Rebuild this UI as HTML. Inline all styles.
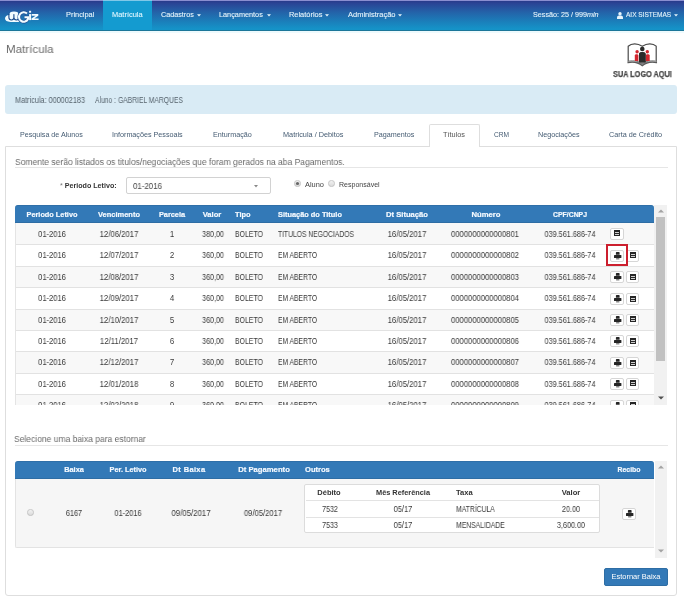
<!DOCTYPE html><html><head><meta charset="utf-8"><style>
html,body{margin:0;padding:0;width:684px;height:600px;overflow:hidden;background:#fff;}
body{position:relative;font-family:"Liberation Sans",sans-serif;-webkit-font-smoothing:antialiased;}
.t{position:absolute;line-height:0;white-space:nowrap;will-change:transform;}
.nv{-webkit-text-stroke:0.1px currentColor;}
.hd{-webkit-text-stroke:0.2px currentColor;}
</style></head><body>

<div style="position:absolute;left:0px;top:0px;width:684px;height:31px;box-sizing:border-box;background:linear-gradient(#283686 0px,#2a4294 3px,#2462a8 12px,#1a80bb 22px,#1593c8 29px);"></div>
<div style="position:absolute;left:0px;top:0px;width:684px;height:1px;box-sizing:border-box;background:#8a8ed0;"></div>
<div style="position:absolute;left:0px;top:29.5px;width:684px;height:1.5px;box-sizing:border-box;background:#1b7699;"></div>
<div style="position:absolute;left:0px;top:31px;width:684px;height:2px;box-sizing:border-box;background:#eefafd;"></div>
<div style="position:absolute;left:103px;top:1px;width:49px;height:28.5px;box-sizing:border-box;background:#149bd0;"></div>
<div style="position:absolute;left:103px;top:0px;width:49px;height:1px;box-sizing:border-box;background:#80c8e8;"></div>
<svg style="position:absolute;left:0px;top:0px" width="45" height="30" viewBox="0 0 45 30">
<path d="M9.3 15 C9.3 12.6 10.8 11.5 14 11.5 C17.2 11.5 18.8 12.6 18.8 15 L20.5 15 L20.5 20.6 C20.5 21.4 19.8 21.9 18.5 21.9 L10.5 21.9 C7 21.9 5 20.6 5 18.6 C5 16.6 6.8 15.2 9.3 15 Z" fill="#f2fbff"/>
<path d="M8.9 14 L8.9 17.6 Q8.9 20 11.35 20 Q13.9 20 13.9 17.6 L13.9 14.6 M13.9 17.6 Q13.9 20 16.45 20 Q19 20 19 17.6 L19 14" stroke="#1f4e8e" stroke-width="1.15" fill="none" stroke-linecap="round"/>
<path d="M27 13.6 A4.7 4.7 0 1 0 28 19 L28 17.2 L24.5 17.2" stroke="#1d4f93" stroke-width="3.4" fill="none"/>
<path d="M27 13.6 A4.7 4.7 0 1 0 28 19 L28 17.2 L24.5 17.2" stroke="#f2fbff" stroke-width="2.1" fill="none"/>
<rect x="29.1" y="14.1" width="2" height="6" fill="#f2fbff"/>
<rect x="29.1" y="10.8" width="2" height="1.9" fill="#f2fbff"/>
<path d="M31.7 14.1 L38.3 14.1 L38.3 15.7 L34.3 18.4 L38.6 18.4 L38.6 20.1 L31.5 20.1 L31.5 18.6 L35.6 15.8 L31.7 15.8 Z" fill="#f2fbff"/>
</svg>
<div class="t nv" style="left:65.8px;top:15.01px;font-size:7.4px;color:#e6f4fb;font-weight:normal;">Principal</div>
<div class="t nv" style="left:111.8px;top:14.99px;font-size:7.45px;color:#dff6ff;font-weight:normal;">Matrícula</div>
<div class="t nv" style="left:160.6px;top:15.08px;font-size:7.2px;color:#e6f4fb;font-weight:normal;">Cadastros</div>
<svg style="position:absolute;left:197.2px;top:14.2px" width="4" height="3" viewBox="0 0 4 3"><path d="M0 0.3 L4 0.3 L2 2.5 Z" fill="#e6f4fb"/></svg>
<div class="t nv" style="left:219.2px;top:15.05px;font-size:7.3px;color:#e6f4fb;font-weight:normal;">Lançamentos</div>
<svg style="position:absolute;left:266.5px;top:14.2px" width="4" height="3" viewBox="0 0 4 3"><path d="M0 0.3 L4 0.3 L2 2.5 Z" fill="#e6f4fb"/></svg>
<div class="t nv" style="left:288.6px;top:15.00px;font-size:7.42px;color:#e6f4fb;font-weight:normal;">Relatórios</div>
<svg style="position:absolute;left:325.2px;top:14.2px" width="4" height="3" viewBox="0 0 4 3"><path d="M0 0.3 L4 0.3 L2 2.5 Z" fill="#e6f4fb"/></svg>
<div class="t nv" style="left:347.5px;top:14.98px;font-size:7.5px;color:#e6f4fb;font-weight:normal;">Administração</div>
<svg style="position:absolute;left:398.2px;top:14.2px" width="4" height="3" viewBox="0 0 4 3"><path d="M0 0.3 L4 0.3 L2 2.5 Z" fill="#e6f4fb"/></svg>
<div class="t nv" style="left:532.5px;top:15.08px;font-size:7.2px;color:#e6f4fb;font-weight:normal;">Sessão: 25 / 999<i>min</i></div>
<svg style="position:absolute;left:617px;top:11.5px" width="6" height="7" viewBox="0 0 6 7"><circle cx="3" cy="1.8" r="1.7" fill="#e6f4fb"/><path d="M0 7 L0 5.6 C0 4.2 1.2 3.6 3 3.6 C4.8 3.6 6 4.2 6 5.6 L6 7 Z" fill="#e6f4fb"/></svg>
<div class="t nv" style="left:626px;top:15.33px;font-size:6.5px;color:#e6f4fb;font-weight:normal;">AIX SISTEMAS</div>
<svg style="position:absolute;left:673.5px;top:14.2px" width="4" height="3" viewBox="0 0 4 3"><path d="M0 0.3 L4 0.3 L2 2.5 Z" fill="#e6f4fb"/></svg>
<div class="t " style="left:5.6px;top:48.68px;font-size:11.776649746192893px;color:#6c6c6c;font-weight:normal;transform:scaleX(0.985);transform-origin:0 0;">Matrícula</div>
<svg style="position:absolute;left:626px;top:42px" width="32" height="26" viewBox="0 0 32 26">
<path d="M2.2 19.5 L2.2 4.2 C5.5 1 11.5 1 16.3 4.2 C21 1 27 1 30.2 4.2 L30.2 19.5" stroke="#4a4a4a" stroke-width="1.2" fill="none"/>
<path d="M2 19.4 L2 20.6 C7 19.6 12 20.2 16.3 23.8 C20.5 20.2 25.5 19.6 30.5 20.6 L30.5 19.4" stroke="#5a5a5a" stroke-width="1.1" fill="#8a8a8a"/>
<path d="M3 19 C8 18.3 12.5 19 16.3 21.8 C20 19 24.5 18.3 29.5 19" stroke="#777" stroke-width="0.9" fill="none"/>
<circle cx="16.3" cy="7" r="2.3" fill="#2b2b2b"/>
<path d="M13 20.3 L13 12 C13 9.2 19.6 9.2 19.6 12 L19.6 20.3 Z" fill="#2b2b2b"/>
<circle cx="11.1" cy="9.8" r="1.7" fill="#d3262e"/>
<path d="M8.8 19 L8.8 13.6 C8.8 11.8 12.4 11.8 12.4 13.6 L12.4 19 Z" fill="#d3262e"/>
<circle cx="21.3" cy="9.8" r="1.7" fill="#d3262e"/>
<path d="M19.8 19 L19.8 13.6 C19.8 11.8 23.7 11.8 23.7 13.6 L23.7 19 Z" fill="#d3262e"/>
<path d="M13 20.3 L13 12 C13 9.2 19.6 9.2 19.6 12 L19.6 20.3 Z" fill="#2b2b2b"/>
</svg>
<div class="t " style="left:612.5px;top:74.85px;font-size:8.133333333333333px;color:#4a4a4a;font-weight:bold;-webkit-text-stroke:0.25px #4a4a4a;transform:scaleX(0.900);transform-origin:0 0;">SUA LOGO AQUI</div>
<div style="position:absolute;left:5px;top:85.3px;width:672px;height:28.5px;box-sizing:border-box;background:#d9ebf5;border-radius:3px;"></div>
<div class="t " style="left:15px;top:99.59px;font-size:8.3px;color:#56636d;font-weight:normal;transform:scaleX(0.877);transform-origin:0 0;">Matricula: 000002183</div>
<div class="t " style="left:94.9px;top:99.59px;font-size:8.3px;color:#56636d;font-weight:normal;transform:scaleX(0.814);transform-origin:0 0;">Aluno : GABRIEL MARQUES</div>
<div style="position:absolute;left:5px;top:146px;width:672px;height:449.5px;box-sizing:border-box;border:1px solid #dedede;border-radius:0 0 3px 3px;"></div>
<div style="position:absolute;left:428.8px;top:124.2px;width:51.19999999999999px;height:22.799999999999997px;box-sizing:border-box;background:#fff;border:1px solid #dedede;border-bottom:none;border-radius:2px 2px 0 0;"></div>
<div class="t " style="left:19.6px;top:135.30px;font-size:7.15px;color:#445b72;font-weight:normal;">Pesquisa de Alunos</div>
<div class="t " style="left:112px;top:135.28px;font-size:7.2px;color:#445b72;font-weight:normal;">Informações Pessoais</div>
<div class="t " style="left:213px;top:135.28px;font-size:7.2px;color:#445b72;font-weight:normal;">Enturmação</div>
<div class="t " style="left:283px;top:135.25px;font-size:7.3px;color:#445b72;font-weight:normal;">Matricula / Debitos</div>
<div class="t " style="left:374px;top:135.28px;font-size:7.2px;color:#445b72;font-weight:normal;">Pagamentos</div>
<div class="t " style="left:443px;top:135.23px;font-size:7.33px;color:#555;font-weight:normal;">Títulos</div>
<div class="t " style="left:493.9px;top:135.48px;font-size:6.63px;color:#445b72;font-weight:normal;">CRM</div>
<div class="t " style="left:538px;top:135.28px;font-size:7.2px;color:#445b72;font-weight:normal;">Negociações</div>
<div class="t " style="left:608.9px;top:135.27px;font-size:7.24px;color:#445b72;font-weight:normal;">Carta de Crédito</div>
<div class="t " style="left:15px;top:161.54px;font-size:9.6px;color:#6a6a6a;font-weight:normal;transform:scaleX(0.887);transform-origin:0 0;">Somente serão listados os titulos/negociações que foram gerados na aba Pagamentos.</div>
<div style="position:absolute;left:15px;top:167px;width:653px;height:1px;box-sizing:border-box;background:#e6e6e6;"></div>
<div class="t " style="left:60px;top:186.20px;font-size:7.14px;color:#333;font-weight:bold;"><span style="font-weight:normal;color:#777">*</span> Periodo Letivo:</div>
<div style="position:absolute;left:126.3px;top:177.4px;width:144.39999999999998px;height:17.0px;box-sizing:border-box;border:1px solid #d2d2d2;border-radius:2px;background:#fff;"></div>
<div class="t " style="left:132.9px;top:185.79px;font-size:8.3px;color:#444;font-weight:normal;transform:scaleX(0.952);transform-origin:0 0;">01-2016</div>
<svg style="position:absolute;left:254px;top:185px" width="4" height="3" viewBox="0 0 4 3"><path d="M0 0 L4 0 L2 2.5 Z" fill="#888"/></svg>
<svg style="position:absolute;left:294.0px;top:180.2px" width="7" height="7" viewBox="0 0 7 7"><defs><linearGradient id="g297" x1="0" y1="0" x2="0" y2="1"><stop offset="0" stop-color="#f4f4f4"/><stop offset="1" stop-color="#d9d9d9"/></linearGradient></defs><circle cx="3.5" cy="3.5" r="3.1" fill="url(#g297)" stroke="#b8b8b8" stroke-width="0.7"/><circle cx="3.5" cy="3.5" r="1.6" fill="#666"/></svg>
<div class="t " style="left:305px;top:184.60px;font-size:7.43px;color:#444;font-weight:normal;">Aluno</div>
<svg style="position:absolute;left:327.9px;top:180.2px" width="7" height="7" viewBox="0 0 7 7"><defs><linearGradient id="g331" x1="0" y1="0" x2="0" y2="1"><stop offset="0" stop-color="#f4f4f4"/><stop offset="1" stop-color="#d9d9d9"/></linearGradient></defs><circle cx="3.5" cy="3.5" r="3.1" fill="url(#g331)" stroke="#b8b8b8" stroke-width="0.7"/></svg>
<div class="t " style="left:339.3px;top:184.74px;font-size:7.04px;color:#444;font-weight:normal;">Responsável</div>
<div style="position:absolute;left:0;top:0;width:684px;height:404.7px;overflow:hidden;">
<div style="position:absolute;left:14.5px;top:205px;width:639.8px;height:18px;box-sizing:border-box;background:#3379b7;border-radius:3px 3px 0 0;border-top:1px solid #2f6fa8;border-bottom:1px solid #2e6da4;"></div>
<div class="t hd" style="left:-248.25px;width:600px;text-align:center;top:214.93px;font-size:7.34px;color:#f4f9ff;font-weight:bold;">Periodo Letivo</div>
<div class="t hd" style="left:-180.75px;width:600px;text-align:center;top:214.88px;font-size:7.48px;color:#f4f9ff;font-weight:bold;">Vencimento</div>
<div class="t hd" style="left:-128.25px;width:600px;text-align:center;top:214.91px;font-size:7.39px;color:#f4f9ff;font-weight:bold;">Parcela</div>
<div class="t hd" style="left:-88px;width:600px;text-align:center;top:214.84px;font-size:7.6px;color:#f4f9ff;font-weight:bold;">Valor</div>
<div class="t hd" style="left:235.3px;top:214.91px;font-size:7.41px;color:#f4f9ff;font-weight:bold;">Tipo</div>
<div class="t hd" style="left:278.4px;top:214.91px;font-size:7.4px;color:#f4f9ff;font-weight:bold;">Situação do Titulo</div>
<div class="t hd" style="left:107px;width:600px;text-align:center;top:214.83px;font-size:7.64px;color:#f4f9ff;font-weight:bold;">Dt Situação</div>
<div class="t hd" style="left:185.60000000000002px;width:600px;text-align:center;top:214.81px;font-size:7.68px;color:#f4f9ff;font-weight:bold;">Número</div>
<div class="t hd" style="left:269.75px;width:600px;text-align:center;top:215.09px;font-size:6.9px;color:#f4f9ff;font-weight:bold;">CPF/CNPJ</div>
<div style="position:absolute;left:14.5px;top:223px;width:639.8px;height:22px;box-sizing:border-box;background:#f8f8f8;border-left:1px solid #e4e4e4;"></div>
<div style="position:absolute;left:14.5px;top:244px;width:639.8px;height:23px;box-sizing:border-box;background:#fff;border-left:1px solid #e4e4e4;"></div>
<div style="position:absolute;left:14.5px;top:266px;width:639.8px;height:22px;box-sizing:border-box;background:#f8f8f8;border-left:1px solid #e4e4e4;"></div>
<div style="position:absolute;left:14.5px;top:287px;width:639.8px;height:23px;box-sizing:border-box;background:#fff;border-left:1px solid #e4e4e4;"></div>
<div style="position:absolute;left:14.5px;top:309px;width:639.8px;height:22px;box-sizing:border-box;background:#f8f8f8;border-left:1px solid #e4e4e4;"></div>
<div style="position:absolute;left:14.5px;top:330px;width:639.8px;height:22px;box-sizing:border-box;background:#fff;border-left:1px solid #e4e4e4;"></div>
<div style="position:absolute;left:14.5px;top:351px;width:639.8px;height:23px;box-sizing:border-box;background:#f8f8f8;border-left:1px solid #e4e4e4;"></div>
<div style="position:absolute;left:14.5px;top:373px;width:639.8px;height:22px;box-sizing:border-box;background:#fff;border-left:1px solid #e4e4e4;"></div>
<div style="position:absolute;left:14.5px;top:394px;width:639.8px;height:23px;box-sizing:border-box;background:#f8f8f8;border-left:1px solid #e4e4e4;"></div>
<div style="position:absolute;left:15.5px;top:244px;width:638.8px;height:1px;box-sizing:border-box;background:#e2e2e2;"></div>
<div style="position:absolute;left:15.5px;top:266px;width:638.8px;height:1px;box-sizing:border-box;background:#e2e2e2;"></div>
<div style="position:absolute;left:15.5px;top:287px;width:638.8px;height:1px;box-sizing:border-box;background:#e2e2e2;"></div>
<div style="position:absolute;left:15.5px;top:309px;width:638.8px;height:1px;box-sizing:border-box;background:#e2e2e2;"></div>
<div style="position:absolute;left:15.5px;top:330px;width:638.8px;height:1px;box-sizing:border-box;background:#e2e2e2;"></div>
<div style="position:absolute;left:15.5px;top:351px;width:638.8px;height:1px;box-sizing:border-box;background:#e2e2e2;"></div>
<div style="position:absolute;left:15.5px;top:373px;width:638.8px;height:1px;box-sizing:border-box;background:#e2e2e2;"></div>
<div style="position:absolute;left:15.5px;top:394px;width:638.8px;height:1px;box-sizing:border-box;background:#e2e2e2;"></div>
<div style="position:absolute;left:15.5px;top:416px;width:638.8px;height:1px;box-sizing:border-box;background:#e2e2e2;"></div>
<div class="t " style="left:-248.25px;width:600px;text-align:center;top:233.99px;font-size:8.3px;color:#383838;font-weight:normal;transform:scaleX(0.910);transform-origin:50% 0;">01-2016</div>
<div class="t " style="left:-180.7px;width:600px;text-align:center;top:233.99px;font-size:8.3px;color:#383838;font-weight:normal;transform:scaleX(0.928);transform-origin:50% 0;">12/06/2017</div>
<div class="t " style="left:-128px;width:600px;text-align:center;top:233.99px;font-size:8.3px;color:#383838;font-weight:normal;transform:scaleX(0.892);transform-origin:50% 0;">1</div>
<div class="t " style="left:-87.4px;width:600px;text-align:center;top:233.99px;font-size:8.3px;color:#383838;font-weight:normal;transform:scaleX(0.859);transform-origin:50% 0;">380,00</div>
<div class="t " style="left:235.3px;top:233.99px;font-size:8.3px;color:#383838;font-weight:normal;transform:scaleX(0.835);transform-origin:0 0;">BOLETO</div>
<div class="t " style="left:278.4px;top:233.99px;font-size:8.3px;color:#383838;font-weight:normal;transform:scaleX(0.812);transform-origin:0 0;">TITULOS NEGOCIADOS</div>
<div class="t " style="left:106.5px;width:600px;text-align:center;top:233.99px;font-size:8.3px;color:#383838;font-weight:normal;transform:scaleX(0.928);transform-origin:50% 0;">16/05/2017</div>
<div class="t " style="left:185.35000000000002px;width:600px;text-align:center;top:233.99px;font-size:8.3px;color:#383838;font-weight:normal;transform:scaleX(0.920);transform-origin:50% 0;">0000000000000801</div>
<div class="t " style="left:270px;width:600px;text-align:center;top:233.99px;font-size:8.3px;color:#383838;font-weight:normal;transform:scaleX(0.877);transform-origin:50% 0;">039.561.686-74</div>
<div style="position:absolute;left:610px;top:228px;width:14px;height:12px;box-sizing:border-box;background:#fff;border:1px solid #d6d6d6;border-radius:2px;"></div>
<svg style="position:absolute;left:614px;top:230px" width="7" height="7" viewBox="0 0 7 7"><rect x="0" y="0" width="6" height="6" fill="#262626"/><rect x="1" y="2" width="4" height="1" fill="#d0d0d0"/><rect x="1" y="4" width="4" height="1" fill="#d0d0d0"/></svg>
<div class="t " style="left:-248.25px;width:600px;text-align:center;top:255.38px;font-size:8.3px;color:#383838;font-weight:normal;transform:scaleX(0.910);transform-origin:50% 0;">01-2016</div>
<div class="t " style="left:-180.7px;width:600px;text-align:center;top:255.38px;font-size:8.3px;color:#383838;font-weight:normal;transform:scaleX(0.928);transform-origin:50% 0;">12/07/2017</div>
<div class="t " style="left:-128px;width:600px;text-align:center;top:255.38px;font-size:8.3px;color:#383838;font-weight:normal;transform:scaleX(0.892);transform-origin:50% 0;">2</div>
<div class="t " style="left:-87.4px;width:600px;text-align:center;top:255.38px;font-size:8.3px;color:#383838;font-weight:normal;transform:scaleX(0.859);transform-origin:50% 0;">360,00</div>
<div class="t " style="left:235.3px;top:255.38px;font-size:8.3px;color:#383838;font-weight:normal;transform:scaleX(0.835);transform-origin:0 0;">BOLETO</div>
<div class="t " style="left:278.4px;top:255.38px;font-size:8.3px;color:#383838;font-weight:normal;transform:scaleX(0.812);transform-origin:0 0;">EM ABERTO</div>
<div class="t " style="left:106.5px;width:600px;text-align:center;top:255.38px;font-size:8.3px;color:#383838;font-weight:normal;transform:scaleX(0.928);transform-origin:50% 0;">16/05/2017</div>
<div class="t " style="left:185.35000000000002px;width:600px;text-align:center;top:255.38px;font-size:8.3px;color:#383838;font-weight:normal;transform:scaleX(0.920);transform-origin:50% 0;">0000000000000802</div>
<div class="t " style="left:270px;width:600px;text-align:center;top:255.38px;font-size:8.3px;color:#383838;font-weight:normal;transform:scaleX(0.877);transform-origin:50% 0;">039.561.686-74</div>
<div style="position:absolute;left:610px;top:250px;width:14px;height:12px;box-sizing:border-box;background:#fff;border:1px solid #d6d6d6;border-radius:2px;"></div>
<svg style="position:absolute;left:614px;top:252px" width="8" height="8" viewBox="0 0 8 8"><path d="M1.9 0.7 Q1.9 0 2.6 0 L4.9 0 Q5.6 0 5.6 0.7 L5.6 2.7 L1.9 2.7 Z" fill="#262626"/><rect x="0" y="3.1" width="7.4" height="3" rx="0.5" fill="#262626"/><rect x="2.1" y="6.4" width="3.3" height="0.9" fill="#3a3a3a"/></svg>
<div style="position:absolute;left:626px;top:250px;width:12.5px;height:12px;box-sizing:border-box;background:#fff;border:1px solid #d6d6d6;border-radius:2px;"></div>
<svg style="position:absolute;left:630px;top:252px" width="7" height="7" viewBox="0 0 7 7"><rect x="0" y="0" width="6" height="6" fill="#262626"/><rect x="1" y="2" width="4" height="1" fill="#d0d0d0"/><rect x="1" y="4" width="4" height="1" fill="#d0d0d0"/></svg>
<div class="t " style="left:-248.25px;width:600px;text-align:center;top:276.77px;font-size:8.3px;color:#383838;font-weight:normal;transform:scaleX(0.910);transform-origin:50% 0;">01-2016</div>
<div class="t " style="left:-180.7px;width:600px;text-align:center;top:276.77px;font-size:8.3px;color:#383838;font-weight:normal;transform:scaleX(0.928);transform-origin:50% 0;">12/08/2017</div>
<div class="t " style="left:-128px;width:600px;text-align:center;top:276.77px;font-size:8.3px;color:#383838;font-weight:normal;transform:scaleX(0.892);transform-origin:50% 0;">3</div>
<div class="t " style="left:-87.4px;width:600px;text-align:center;top:276.77px;font-size:8.3px;color:#383838;font-weight:normal;transform:scaleX(0.859);transform-origin:50% 0;">360,00</div>
<div class="t " style="left:235.3px;top:276.77px;font-size:8.3px;color:#383838;font-weight:normal;transform:scaleX(0.835);transform-origin:0 0;">BOLETO</div>
<div class="t " style="left:278.4px;top:276.77px;font-size:8.3px;color:#383838;font-weight:normal;transform:scaleX(0.812);transform-origin:0 0;">EM ABERTO</div>
<div class="t " style="left:106.5px;width:600px;text-align:center;top:276.77px;font-size:8.3px;color:#383838;font-weight:normal;transform:scaleX(0.928);transform-origin:50% 0;">16/05/2017</div>
<div class="t " style="left:185.35000000000002px;width:600px;text-align:center;top:276.77px;font-size:8.3px;color:#383838;font-weight:normal;transform:scaleX(0.920);transform-origin:50% 0;">0000000000000803</div>
<div class="t " style="left:270px;width:600px;text-align:center;top:276.77px;font-size:8.3px;color:#383838;font-weight:normal;transform:scaleX(0.877);transform-origin:50% 0;">039.561.686-74</div>
<div style="position:absolute;left:610px;top:271px;width:14px;height:12px;box-sizing:border-box;background:#fff;border:1px solid #d6d6d6;border-radius:2px;"></div>
<svg style="position:absolute;left:614px;top:273px" width="8" height="8" viewBox="0 0 8 8"><path d="M1.9 0.7 Q1.9 0 2.6 0 L4.9 0 Q5.6 0 5.6 0.7 L5.6 2.7 L1.9 2.7 Z" fill="#262626"/><rect x="0" y="3.1" width="7.4" height="3" rx="0.5" fill="#262626"/><rect x="2.1" y="6.4" width="3.3" height="0.9" fill="#3a3a3a"/></svg>
<div style="position:absolute;left:626px;top:271px;width:12.5px;height:12px;box-sizing:border-box;background:#fff;border:1px solid #d6d6d6;border-radius:2px;"></div>
<svg style="position:absolute;left:630px;top:274px" width="7" height="7" viewBox="0 0 7 7"><rect x="0" y="0" width="6" height="6" fill="#262626"/><rect x="1" y="2" width="4" height="1" fill="#d0d0d0"/><rect x="1" y="4" width="4" height="1" fill="#d0d0d0"/></svg>
<div class="t " style="left:-248.25px;width:600px;text-align:center;top:298.16px;font-size:8.3px;color:#383838;font-weight:normal;transform:scaleX(0.910);transform-origin:50% 0;">01-2016</div>
<div class="t " style="left:-180.7px;width:600px;text-align:center;top:298.16px;font-size:8.3px;color:#383838;font-weight:normal;transform:scaleX(0.928);transform-origin:50% 0;">12/09/2017</div>
<div class="t " style="left:-128px;width:600px;text-align:center;top:298.16px;font-size:8.3px;color:#383838;font-weight:normal;transform:scaleX(0.892);transform-origin:50% 0;">4</div>
<div class="t " style="left:-87.4px;width:600px;text-align:center;top:298.16px;font-size:8.3px;color:#383838;font-weight:normal;transform:scaleX(0.859);transform-origin:50% 0;">360,00</div>
<div class="t " style="left:235.3px;top:298.16px;font-size:8.3px;color:#383838;font-weight:normal;transform:scaleX(0.835);transform-origin:0 0;">BOLETO</div>
<div class="t " style="left:278.4px;top:298.16px;font-size:8.3px;color:#383838;font-weight:normal;transform:scaleX(0.812);transform-origin:0 0;">EM ABERTO</div>
<div class="t " style="left:106.5px;width:600px;text-align:center;top:298.16px;font-size:8.3px;color:#383838;font-weight:normal;transform:scaleX(0.928);transform-origin:50% 0;">16/05/2017</div>
<div class="t " style="left:185.35000000000002px;width:600px;text-align:center;top:298.16px;font-size:8.3px;color:#383838;font-weight:normal;transform:scaleX(0.920);transform-origin:50% 0;">0000000000000804</div>
<div class="t " style="left:270px;width:600px;text-align:center;top:298.16px;font-size:8.3px;color:#383838;font-weight:normal;transform:scaleX(0.877);transform-origin:50% 0;">039.561.686-74</div>
<div style="position:absolute;left:610px;top:293px;width:14px;height:12px;box-sizing:border-box;background:#fff;border:1px solid #d6d6d6;border-radius:2px;"></div>
<svg style="position:absolute;left:614px;top:295px" width="8" height="8" viewBox="0 0 8 8"><path d="M1.9 0.7 Q1.9 0 2.6 0 L4.9 0 Q5.6 0 5.6 0.7 L5.6 2.7 L1.9 2.7 Z" fill="#262626"/><rect x="0" y="3.1" width="7.4" height="3" rx="0.5" fill="#262626"/><rect x="2.1" y="6.4" width="3.3" height="0.9" fill="#3a3a3a"/></svg>
<div style="position:absolute;left:626px;top:293px;width:12.5px;height:12px;box-sizing:border-box;background:#fff;border:1px solid #d6d6d6;border-radius:2px;"></div>
<svg style="position:absolute;left:630px;top:296px" width="7" height="7" viewBox="0 0 7 7"><rect x="0" y="0" width="6" height="6" fill="#262626"/><rect x="1" y="2" width="4" height="1" fill="#d0d0d0"/><rect x="1" y="4" width="4" height="1" fill="#d0d0d0"/></svg>
<div class="t " style="left:-248.25px;width:600px;text-align:center;top:319.55px;font-size:8.3px;color:#383838;font-weight:normal;transform:scaleX(0.910);transform-origin:50% 0;">01-2016</div>
<div class="t " style="left:-180.7px;width:600px;text-align:center;top:319.55px;font-size:8.3px;color:#383838;font-weight:normal;transform:scaleX(0.928);transform-origin:50% 0;">12/10/2017</div>
<div class="t " style="left:-128px;width:600px;text-align:center;top:319.55px;font-size:8.3px;color:#383838;font-weight:normal;transform:scaleX(0.892);transform-origin:50% 0;">5</div>
<div class="t " style="left:-87.4px;width:600px;text-align:center;top:319.55px;font-size:8.3px;color:#383838;font-weight:normal;transform:scaleX(0.859);transform-origin:50% 0;">360,00</div>
<div class="t " style="left:235.3px;top:319.55px;font-size:8.3px;color:#383838;font-weight:normal;transform:scaleX(0.835);transform-origin:0 0;">BOLETO</div>
<div class="t " style="left:278.4px;top:319.55px;font-size:8.3px;color:#383838;font-weight:normal;transform:scaleX(0.812);transform-origin:0 0;">EM ABERTO</div>
<div class="t " style="left:106.5px;width:600px;text-align:center;top:319.55px;font-size:8.3px;color:#383838;font-weight:normal;transform:scaleX(0.928);transform-origin:50% 0;">16/05/2017</div>
<div class="t " style="left:185.35000000000002px;width:600px;text-align:center;top:319.55px;font-size:8.3px;color:#383838;font-weight:normal;transform:scaleX(0.920);transform-origin:50% 0;">0000000000000805</div>
<div class="t " style="left:270px;width:600px;text-align:center;top:319.55px;font-size:8.3px;color:#383838;font-weight:normal;transform:scaleX(0.877);transform-origin:50% 0;">039.561.686-74</div>
<div style="position:absolute;left:610px;top:314px;width:14px;height:12px;box-sizing:border-box;background:#fff;border:1px solid #d6d6d6;border-radius:2px;"></div>
<svg style="position:absolute;left:614px;top:316px" width="8" height="8" viewBox="0 0 8 8"><path d="M1.9 0.7 Q1.9 0 2.6 0 L4.9 0 Q5.6 0 5.6 0.7 L5.6 2.7 L1.9 2.7 Z" fill="#262626"/><rect x="0" y="3.1" width="7.4" height="3" rx="0.5" fill="#262626"/><rect x="2.1" y="6.4" width="3.3" height="0.9" fill="#3a3a3a"/></svg>
<div style="position:absolute;left:626px;top:314px;width:12.5px;height:12px;box-sizing:border-box;background:#fff;border:1px solid #d6d6d6;border-radius:2px;"></div>
<svg style="position:absolute;left:630px;top:316px" width="7" height="7" viewBox="0 0 7 7"><rect x="0" y="0" width="6" height="6" fill="#262626"/><rect x="1" y="2" width="4" height="1" fill="#d0d0d0"/><rect x="1" y="4" width="4" height="1" fill="#d0d0d0"/></svg>
<div class="t " style="left:-248.25px;width:600px;text-align:center;top:340.94px;font-size:8.3px;color:#383838;font-weight:normal;transform:scaleX(0.910);transform-origin:50% 0;">01-2016</div>
<div class="t " style="left:-180.7px;width:600px;text-align:center;top:340.94px;font-size:8.3px;color:#383838;font-weight:normal;transform:scaleX(0.928);transform-origin:50% 0;">12/11/2017</div>
<div class="t " style="left:-128px;width:600px;text-align:center;top:340.94px;font-size:8.3px;color:#383838;font-weight:normal;transform:scaleX(0.892);transform-origin:50% 0;">6</div>
<div class="t " style="left:-87.4px;width:600px;text-align:center;top:340.94px;font-size:8.3px;color:#383838;font-weight:normal;transform:scaleX(0.859);transform-origin:50% 0;">360,00</div>
<div class="t " style="left:235.3px;top:340.94px;font-size:8.3px;color:#383838;font-weight:normal;transform:scaleX(0.835);transform-origin:0 0;">BOLETO</div>
<div class="t " style="left:278.4px;top:340.94px;font-size:8.3px;color:#383838;font-weight:normal;transform:scaleX(0.812);transform-origin:0 0;">EM ABERTO</div>
<div class="t " style="left:106.5px;width:600px;text-align:center;top:340.94px;font-size:8.3px;color:#383838;font-weight:normal;transform:scaleX(0.928);transform-origin:50% 0;">16/05/2017</div>
<div class="t " style="left:185.35000000000002px;width:600px;text-align:center;top:340.94px;font-size:8.3px;color:#383838;font-weight:normal;transform:scaleX(0.920);transform-origin:50% 0;">0000000000000806</div>
<div class="t " style="left:270px;width:600px;text-align:center;top:340.94px;font-size:8.3px;color:#383838;font-weight:normal;transform:scaleX(0.877);transform-origin:50% 0;">039.561.686-74</div>
<div style="position:absolute;left:610px;top:335px;width:14px;height:12px;box-sizing:border-box;background:#fff;border:1px solid #d6d6d6;border-radius:2px;"></div>
<svg style="position:absolute;left:614px;top:337px" width="8" height="8" viewBox="0 0 8 8"><path d="M1.9 0.7 Q1.9 0 2.6 0 L4.9 0 Q5.6 0 5.6 0.7 L5.6 2.7 L1.9 2.7 Z" fill="#262626"/><rect x="0" y="3.1" width="7.4" height="3" rx="0.5" fill="#262626"/><rect x="2.1" y="6.4" width="3.3" height="0.9" fill="#3a3a3a"/></svg>
<div style="position:absolute;left:626px;top:335px;width:12.5px;height:12px;box-sizing:border-box;background:#fff;border:1px solid #d6d6d6;border-radius:2px;"></div>
<svg style="position:absolute;left:630px;top:338px" width="7" height="7" viewBox="0 0 7 7"><rect x="0" y="0" width="6" height="6" fill="#262626"/><rect x="1" y="2" width="4" height="1" fill="#d0d0d0"/><rect x="1" y="4" width="4" height="1" fill="#d0d0d0"/></svg>
<div class="t " style="left:-248.25px;width:600px;text-align:center;top:362.33px;font-size:8.3px;color:#383838;font-weight:normal;transform:scaleX(0.910);transform-origin:50% 0;">01-2016</div>
<div class="t " style="left:-180.7px;width:600px;text-align:center;top:362.33px;font-size:8.3px;color:#383838;font-weight:normal;transform:scaleX(0.928);transform-origin:50% 0;">12/12/2017</div>
<div class="t " style="left:-128px;width:600px;text-align:center;top:362.33px;font-size:8.3px;color:#383838;font-weight:normal;transform:scaleX(0.892);transform-origin:50% 0;">7</div>
<div class="t " style="left:-87.4px;width:600px;text-align:center;top:362.33px;font-size:8.3px;color:#383838;font-weight:normal;transform:scaleX(0.859);transform-origin:50% 0;">360,00</div>
<div class="t " style="left:235.3px;top:362.33px;font-size:8.3px;color:#383838;font-weight:normal;transform:scaleX(0.835);transform-origin:0 0;">BOLETO</div>
<div class="t " style="left:278.4px;top:362.33px;font-size:8.3px;color:#383838;font-weight:normal;transform:scaleX(0.812);transform-origin:0 0;">EM ABERTO</div>
<div class="t " style="left:106.5px;width:600px;text-align:center;top:362.33px;font-size:8.3px;color:#383838;font-weight:normal;transform:scaleX(0.928);transform-origin:50% 0;">16/05/2017</div>
<div class="t " style="left:185.35000000000002px;width:600px;text-align:center;top:362.33px;font-size:8.3px;color:#383838;font-weight:normal;transform:scaleX(0.920);transform-origin:50% 0;">0000000000000807</div>
<div class="t " style="left:270px;width:600px;text-align:center;top:362.33px;font-size:8.3px;color:#383838;font-weight:normal;transform:scaleX(0.877);transform-origin:50% 0;">039.561.686-74</div>
<div style="position:absolute;left:610px;top:357px;width:14px;height:12px;box-sizing:border-box;background:#fff;border:1px solid #d6d6d6;border-radius:2px;"></div>
<svg style="position:absolute;left:614px;top:359px" width="8" height="8" viewBox="0 0 8 8"><path d="M1.9 0.7 Q1.9 0 2.6 0 L4.9 0 Q5.6 0 5.6 0.7 L5.6 2.7 L1.9 2.7 Z" fill="#262626"/><rect x="0" y="3.1" width="7.4" height="3" rx="0.5" fill="#262626"/><rect x="2.1" y="6.4" width="3.3" height="0.9" fill="#3a3a3a"/></svg>
<div style="position:absolute;left:626px;top:357px;width:12.5px;height:12px;box-sizing:border-box;background:#fff;border:1px solid #d6d6d6;border-radius:2px;"></div>
<svg style="position:absolute;left:630px;top:360px" width="7" height="7" viewBox="0 0 7 7"><rect x="0" y="0" width="6" height="6" fill="#262626"/><rect x="1" y="2" width="4" height="1" fill="#d0d0d0"/><rect x="1" y="4" width="4" height="1" fill="#d0d0d0"/></svg>
<div class="t " style="left:-248.25px;width:600px;text-align:center;top:383.72px;font-size:8.3px;color:#383838;font-weight:normal;transform:scaleX(0.910);transform-origin:50% 0;">01-2016</div>
<div class="t " style="left:-180.7px;width:600px;text-align:center;top:383.72px;font-size:8.3px;color:#383838;font-weight:normal;transform:scaleX(0.928);transform-origin:50% 0;">12/01/2018</div>
<div class="t " style="left:-128px;width:600px;text-align:center;top:383.72px;font-size:8.3px;color:#383838;font-weight:normal;transform:scaleX(0.892);transform-origin:50% 0;">8</div>
<div class="t " style="left:-87.4px;width:600px;text-align:center;top:383.72px;font-size:8.3px;color:#383838;font-weight:normal;transform:scaleX(0.859);transform-origin:50% 0;">360,00</div>
<div class="t " style="left:235.3px;top:383.72px;font-size:8.3px;color:#383838;font-weight:normal;transform:scaleX(0.835);transform-origin:0 0;">BOLETO</div>
<div class="t " style="left:278.4px;top:383.72px;font-size:8.3px;color:#383838;font-weight:normal;transform:scaleX(0.812);transform-origin:0 0;">EM ABERTO</div>
<div class="t " style="left:106.5px;width:600px;text-align:center;top:383.72px;font-size:8.3px;color:#383838;font-weight:normal;transform:scaleX(0.928);transform-origin:50% 0;">16/05/2017</div>
<div class="t " style="left:185.35000000000002px;width:600px;text-align:center;top:383.72px;font-size:8.3px;color:#383838;font-weight:normal;transform:scaleX(0.920);transform-origin:50% 0;">0000000000000808</div>
<div class="t " style="left:270px;width:600px;text-align:center;top:383.72px;font-size:8.3px;color:#383838;font-weight:normal;transform:scaleX(0.877);transform-origin:50% 0;">039.561.686-74</div>
<div style="position:absolute;left:610px;top:378px;width:14px;height:12px;box-sizing:border-box;background:#fff;border:1px solid #d6d6d6;border-radius:2px;"></div>
<svg style="position:absolute;left:614px;top:380px" width="8" height="8" viewBox="0 0 8 8"><path d="M1.9 0.7 Q1.9 0 2.6 0 L4.9 0 Q5.6 0 5.6 0.7 L5.6 2.7 L1.9 2.7 Z" fill="#262626"/><rect x="0" y="3.1" width="7.4" height="3" rx="0.5" fill="#262626"/><rect x="2.1" y="6.4" width="3.3" height="0.9" fill="#3a3a3a"/></svg>
<div style="position:absolute;left:626px;top:378px;width:12.5px;height:12px;box-sizing:border-box;background:#fff;border:1px solid #d6d6d6;border-radius:2px;"></div>
<svg style="position:absolute;left:630px;top:380px" width="7" height="7" viewBox="0 0 7 7"><rect x="0" y="0" width="6" height="6" fill="#262626"/><rect x="1" y="2" width="4" height="1" fill="#d0d0d0"/><rect x="1" y="4" width="4" height="1" fill="#d0d0d0"/></svg>
<div class="t " style="left:-248.25px;width:600px;text-align:center;top:405.11px;font-size:8.3px;color:#383838;font-weight:normal;transform:scaleX(0.910);transform-origin:50% 0;">01-2016</div>
<div class="t " style="left:-180.7px;width:600px;text-align:center;top:405.11px;font-size:8.3px;color:#383838;font-weight:normal;transform:scaleX(0.928);transform-origin:50% 0;">12/02/2018</div>
<div class="t " style="left:-128px;width:600px;text-align:center;top:405.11px;font-size:8.3px;color:#383838;font-weight:normal;transform:scaleX(0.892);transform-origin:50% 0;">9</div>
<div class="t " style="left:-87.4px;width:600px;text-align:center;top:405.11px;font-size:8.3px;color:#383838;font-weight:normal;transform:scaleX(0.859);transform-origin:50% 0;">360,00</div>
<div class="t " style="left:235.3px;top:405.11px;font-size:8.3px;color:#383838;font-weight:normal;transform:scaleX(0.835);transform-origin:0 0;">BOLETO</div>
<div class="t " style="left:278.4px;top:405.11px;font-size:8.3px;color:#383838;font-weight:normal;transform:scaleX(0.812);transform-origin:0 0;">EM ABERTO</div>
<div class="t " style="left:106.5px;width:600px;text-align:center;top:405.11px;font-size:8.3px;color:#383838;font-weight:normal;transform:scaleX(0.928);transform-origin:50% 0;">16/05/2017</div>
<div class="t " style="left:185.35000000000002px;width:600px;text-align:center;top:405.11px;font-size:8.3px;color:#383838;font-weight:normal;transform:scaleX(0.920);transform-origin:50% 0;">0000000000000809</div>
<div class="t " style="left:270px;width:600px;text-align:center;top:405.11px;font-size:8.3px;color:#383838;font-weight:normal;transform:scaleX(0.877);transform-origin:50% 0;">039.561.686-74</div>
<div style="position:absolute;left:610px;top:400px;width:14px;height:12px;box-sizing:border-box;background:#fff;border:1px solid #d6d6d6;border-radius:2px;"></div>
<svg style="position:absolute;left:614px;top:402px" width="8" height="8" viewBox="0 0 8 8"><path d="M1.9 0.7 Q1.9 0 2.6 0 L4.9 0 Q5.6 0 5.6 0.7 L5.6 2.7 L1.9 2.7 Z" fill="#262626"/><rect x="0" y="3.1" width="7.4" height="3" rx="0.5" fill="#262626"/><rect x="2.1" y="6.4" width="3.3" height="0.9" fill="#3a3a3a"/></svg>
<div style="position:absolute;left:626px;top:400px;width:12.5px;height:12px;box-sizing:border-box;background:#fff;border:1px solid #d6d6d6;border-radius:2px;"></div>
<svg style="position:absolute;left:630px;top:402px" width="7" height="7" viewBox="0 0 7 7"><rect x="0" y="0" width="6" height="6" fill="#262626"/><rect x="1" y="2" width="4" height="1" fill="#d0d0d0"/><rect x="1" y="4" width="4" height="1" fill="#d0d0d0"/></svg>
</div>
<div style="position:absolute;left:606.2px;top:244px;width:21.59999999999991px;height:21.80000000000001px;box-sizing:border-box;border:2px solid #cc1f2e;"></div>
<div style="position:absolute;left:654.3px;top:205px;width:12.700000000000045px;height:199.7px;box-sizing:border-box;background:#f1f1f1;"></div>
<div style="position:absolute;left:656px;top:217px;width:9.299999999999955px;height:143.60000000000002px;box-sizing:border-box;background:#c1c1c1;"></div>
<svg style="position:absolute;left:658px;top:209px" width="6" height="4" viewBox="0 0 6 4"><path d="M0 3.5 L6 3.5 L3 0.5 Z" fill="#a3a3a3"/></svg>
<svg style="position:absolute;left:658px;top:395.5px" width="6" height="4" viewBox="0 0 6 4"><path d="M0 0.5 L6 0.5 L3 3.5 Z" fill="#505050"/></svg>
<div class="t " style="left:14.2px;top:439.44px;font-size:9.6px;color:#6a6a6a;font-weight:normal;transform:scaleX(0.886);transform-origin:0 0;">Selecione uma baixa para estornar</div>
<div style="position:absolute;left:14.5px;top:444.8px;width:653.5px;height:1.0px;box-sizing:border-box;background:#e6e6e6;"></div>
<div style="position:absolute;left:14.5px;top:460.5px;width:639.8px;height:18.30000000000001px;box-sizing:border-box;background:#3379b7;border-radius:3px 3px 0 0;border-top:1px solid #2f6fa8;border-bottom:1px solid #2e6da4;"></div>
<div style="position:absolute;left:14.5px;top:478.8px;width:639.8px;height:68.99999999999994px;box-sizing:border-box;background:#f6f6f6;border:1px solid #e3e3e3;border-top:none;border-right:none;border-radius:0 0 0 2px;"></div>
<div class="t hd" style="left:-225.7px;width:600px;text-align:center;top:470.01px;font-size:7.4px;color:#f4f9ff;font-weight:bold;">Baixa</div>
<div class="t hd" style="left:-172px;width:600px;text-align:center;top:470.04px;font-size:7.32px;color:#f4f9ff;font-weight:bold;">Per. Letivo</div>
<div class="t hd" style="left:-111px;width:600px;text-align:center;top:469.98px;font-size:7.5px;color:#f4f9ff;font-weight:bold;letter-spacing:0.35px;">Dt Baixa</div>
<div class="t hd" style="left:-36.5px;width:600px;text-align:center;top:469.91px;font-size:7.69px;color:#f4f9ff;font-weight:bold;">Dt Pagamento</div>
<div class="t hd" style="left:304.5px;top:469.95px;font-size:7.57px;color:#f4f9ff;font-weight:bold;">Outros</div>
<div class="t hd" style="left:328.5px;width:600px;text-align:center;top:470.19px;font-size:6.9px;color:#f4f9ff;font-weight:bold;">Recibo</div>
<svg style="position:absolute;left:27.2px;top:508.5px" width="7" height="7" viewBox="0 0 7 7"><defs><linearGradient id="g30" x1="0" y1="0" x2="0" y2="1"><stop offset="0" stop-color="#f4f4f4"/><stop offset="1" stop-color="#d9d9d9"/></linearGradient></defs><circle cx="3.5" cy="3.5" r="3.1" fill="url(#g30)" stroke="#b8b8b8" stroke-width="0.7"/></svg>
<div class="t " style="left:-226.1px;width:600px;text-align:center;top:513.39px;font-size:8.3px;color:#383838;font-weight:normal;transform:scaleX(0.880);transform-origin:50% 0;">6167</div>
<div class="t " style="left:-172.4px;width:600px;text-align:center;top:513.39px;font-size:8.3px;color:#383838;font-weight:normal;transform:scaleX(0.892);transform-origin:50% 0;">01-2016</div>
<div class="t " style="left:-109.5px;width:600px;text-align:center;top:513.39px;font-size:8.3px;color:#383838;font-weight:normal;transform:scaleX(0.940);transform-origin:50% 0;">09/05/2017</div>
<div class="t " style="left:-36.69999999999999px;width:600px;text-align:center;top:513.39px;font-size:8.3px;color:#383838;font-weight:normal;transform:scaleX(0.916);transform-origin:50% 0;">09/05/2017</div>
<div style="position:absolute;left:304px;top:484.3px;width:296px;height:49.099999999999966px;box-sizing:border-box;background:#fff;border:1px solid #dcdcdc;border-radius:2px;"></div>
<div style="position:absolute;left:305.5px;top:500.2px;width:293.5px;height:1.0px;box-sizing:border-box;background:#e3e3e3;"></div>
<div style="position:absolute;left:305.5px;top:516.6px;width:293.5px;height:1.0px;box-sizing:border-box;background:#e3e3e3;"></div>
<div class="t " style="left:29.30000000000001px;width:600px;text-align:center;top:492.57px;font-size:7.52px;color:#333;font-weight:bold;">Débito</div>
<div class="t " style="left:103px;width:600px;text-align:center;top:492.62px;font-size:7.36px;color:#333;font-weight:bold;">Mês Referência</div>
<div class="t " style="left:456px;top:492.54px;font-size:7.6px;color:#333;font-weight:bold;">Taxa</div>
<div class="t " style="left:271.29999999999995px;width:600px;text-align:center;top:492.54px;font-size:7.6px;color:#333;font-weight:bold;">Valor</div>
<div class="t " style="left:29.5px;width:600px;text-align:center;top:509.39px;font-size:8.3px;color:#383838;font-weight:normal;transform:scaleX(0.851);transform-origin:50% 0;">7532</div>
<div class="t " style="left:102.89999999999998px;width:600px;text-align:center;top:509.39px;font-size:8.3px;color:#383838;font-weight:normal;transform:scaleX(0.890);transform-origin:50% 0;">05/17</div>
<div class="t " style="left:456px;top:509.39px;font-size:8.3px;color:#383838;font-weight:normal;transform:scaleX(0.819);transform-origin:0 0;">MATRÍCULA</div>
<div class="t " style="left:271.29999999999995px;width:600px;text-align:center;top:509.39px;font-size:8.3px;color:#383838;font-weight:normal;transform:scaleX(0.867);transform-origin:50% 0;">20.00</div>
<div class="t " style="left:29.5px;width:600px;text-align:center;top:524.89px;font-size:8.3px;color:#383838;font-weight:normal;transform:scaleX(0.851);transform-origin:50% 0;">7533</div>
<div class="t " style="left:102.89999999999998px;width:600px;text-align:center;top:524.89px;font-size:8.3px;color:#383838;font-weight:normal;transform:scaleX(0.890);transform-origin:50% 0;">05/17</div>
<div class="t " style="left:456px;top:524.89px;font-size:8.3px;color:#383838;font-weight:normal;transform:scaleX(0.819);transform-origin:0 0;">MENSALIDADE</div>
<div class="t " style="left:271.29999999999995px;width:600px;text-align:center;top:524.89px;font-size:8.3px;color:#383838;font-weight:normal;transform:scaleX(0.867);transform-origin:50% 0;">3,600.00</div>
<div style="position:absolute;left:622px;top:508px;width:13.5px;height:11.600000000000023px;box-sizing:border-box;background:#fff;border:1px solid #d6d6d6;border-radius:2px;"></div>
<svg style="position:absolute;left:625.8px;top:509.8px" width="8" height="8" viewBox="0 0 8 8"><path d="M1.9 0.7 Q1.9 0 2.6 0 L4.9 0 Q5.6 0 5.6 0.7 L5.6 2.7 L1.9 2.7 Z" fill="#262626"/><rect x="0" y="3.1" width="7.4" height="3" rx="0.5" fill="#262626"/><rect x="2.1" y="6.4" width="3.3" height="0.9" fill="#3a3a3a"/></svg>
<div style="position:absolute;left:654.5px;top:460.5px;width:12.5px;height:97.0px;box-sizing:border-box;background:#f1f1f1;"></div>
<svg style="position:absolute;left:658px;top:464.5px" width="6" height="4" viewBox="0 0 6 4"><path d="M0 3.5 L6 3.5 L3 0.5 Z" fill="#a3a3a3"/></svg>
<svg style="position:absolute;left:658px;top:549px" width="6" height="4" viewBox="0 0 6 4"><path d="M0 0.5 L6 0.5 L3 3.5 Z" fill="#a3a3a3"/></svg>
<div style="position:absolute;left:604.3px;top:568.3px;width:63.700000000000045px;height:17.5px;box-sizing:border-box;background:#3379b7;border:1px solid #2e6da4;border-radius:2px;"></div>
<div class="t " style="left:336.1px;width:600px;text-align:center;top:577.19px;font-size:7.47px;color:#fff;font-weight:normal;">Estornar Baixa</div>
</body></html>
